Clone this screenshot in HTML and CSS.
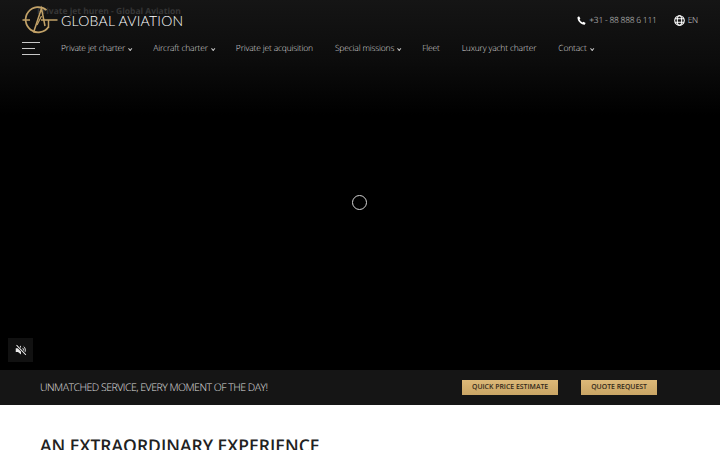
FILE: index.html
```html
<!DOCTYPE html>
<html lang="en">

<head>
    <meta charset="UTF-8">
    <meta name="viewport" content="width=device-width, initial-scale=1.0">
    <title>Global Aviation</title>
    <link rel="stylesheet" href="styles.css">
</head>

<body>
    <section class="hero">
        <span class="ghost-title">Private jet huren - Global Aviation</span>

        <header class="header">
            <div class="top-row">
                <a class="logo" href="#">
                    <svg class="logo-mark" viewBox="0 0 36 30" width="36" height="30" fill="none" stroke="#c2a268">
                        <path d="M24.5 5.2A12.6 12.6 0 1 0 26.5 22" stroke-width="1.7" />
                        <path d="M11.5 27.5L19.5 3.5L23 21" stroke-width="1.5" />
                        <path d="M15 20L19.5 11" stroke-width="1.2" />
                        <path d="M0.5 15H8M19 15H35.5" stroke-width="1.3" />
                        <path d="M26.5 15V23" stroke-width="1.5" />
                    </svg>
                    <span class="logo-text">GLOBAL AVIATION</span>
                </a>
                <div class="top-links">
                    <span class="phone">
                        <svg class="icon" viewBox="0 0 16 16" width="9" height="9" fill="#fff">
                            <path d="M3.6 0.6L6 4.6 4.6 6.4C5.4 8.4 7.4 10.6 9.6 11.4L11.4 10 15.4 12.6 13.6 15.6C7.4 16 0.4 8.6 0.8 2.2Z" />
                        </svg>
                        +31 - 88 888 6 111
                    </span>
                    <span class="lang">
                        <svg class="icon" viewBox="0 0 16 16" width="11" height="11" fill="none" stroke="#fff" stroke-width="1.5">
                            <circle cx="8" cy="8" r="7" />
                            <ellipse cx="8" cy="8" rx="3.2" ry="7" />
                            <path d="M1.5 5.5H14.5M1.5 10.5H14.5" />
                        </svg>
                        EN
                    </span>
                </div>
            </div>

            <nav class="nav-row">
                <div class="burger">
                    <span class="burger-long"></span>
                    <span class="burger-short"></span>
                    <span class="burger-long"></span>
                </div>
                <ul class="menu">
                    <li class="has-sub">Private jet charter</li>
                    <li class="has-sub">Aircraft charter</li>
                    <li>Private jet acquisition</li>
                    <li class="has-sub">Special missions</li>
                    <li>Fleet</li>
                    <li>Luxury yacht charter</li>
                    <li class="has-sub">Contact</li>
                </ul>
            </nav>
        </header>

        <div class="spinner"></div>

        <button class="mute">
            <svg viewBox="0 0 16 16" width="12" height="12" fill="#e8e8e8">
                <path d="M1 5.5H4L8 2V14L4 10.5H1Z" />
                <path d="M10 5.2C11.6 6.4 11.6 9.6 10 10.8M11.6 3.4C14.4 5.4 14.4 10.6 11.6 12.6" fill="none" stroke="#e8e8e8" stroke-width="1.3" />
                <path d="M2 1.5L14.5 14.5" fill="none" stroke="#000" stroke-width="3.2" />
                <path d="M2 1.5L14.5 14.5" fill="none" stroke="#e8e8e8" stroke-width="1.4" />
            </svg>
        </button>
    </section>

    <section class="cta-bar">
        <p class="slogan">UNMATCHED SERVICE, EVERY MOMENT OF THE DAY!</p>
        <div class="cta-buttons">
            <a class="btn-gold" href="#">QUICK PRICE ESTIMATE</a>
            <a class="btn-gold" href="#">QUOTE REQUEST</a>
        </div>
    </section>

    <section class="intro">
        <h1>AN EXTRAORDINARY EXPERIENCE</h1>
    </section>
</body>

</html>
```

FILE: styles.css
```css
html,
body {
    height: 100%;
    overflow: hidden;
}

body {
    margin: 0;
    background: #fff;
    font-family: 'Open Sans', sans-serif;
    text-rendering: geometricPrecision;
}

a {
    text-decoration: none;
}

.hero {
    position: relative;
    height: 370px;
    background: linear-gradient(to bottom, #151515 0, #0c0c0c 60px, #000 115px);
}

.ghost-title {
    position: absolute;
    left: 37px;
    top: 6px;
    font-size: 8.5px;
    font-weight: 700;
    color: #363636;
}

.header {
    position: relative;
    padding: 5px 22px 0;
}

.top-row {
    display: flex;
    justify-content: space-between;
    align-items: center;
    height: 30px;
}

.logo {
    display: flex;
    align-items: center;
    gap: 3px;
}

.logo-text {
    font-family: 'Lato', sans-serif;
    font-weight: 300;
    font-size: 14px;
    letter-spacing: 0.25px;
    color: #fff;
    margin-top: 1px;
}

.top-links {
    display: flex;
    gap: 17px;
    font-size: 8.5px;
    letter-spacing: -0.25px;
    font-weight: 300;
    color: #d8d8d8;
}

.phone,
.lang {
    display: flex;
    align-items: center;
    gap: 3px;
}

.nav-row {
    display: flex;
    align-items: center;
    margin-top: 7px;
    height: 13px;
}

.burger {
    display: flex;
    flex-direction: column;
    align-items: flex-start;
    gap: 5px;
    width: 39px;
}

.burger span {
    display: block;
    height: 1px;
    background: #c8c8c8;
}

.burger-long {
    width: 18px;
}

.burger-short {
    width: 13px;
}

.menu {
    display: flex;
    gap: 22px;
    margin: 0;
    padding: 0;
    list-style: none;
    font-size: 8.5px;
    font-weight: 300;
    letter-spacing: -0.18px;
    color: #dcdcdc;
}

.has-sub::after {
    content: "";
    display: inline-block;
    width: 2px;
    height: 2px;
    margin-left: 3px;
    border-right: 1px solid #c4c4c4;
    border-bottom: 1px solid #c4c4c4;
    transform: rotate(45deg) translateY(-1px);
}

.spinner {
    position: absolute;
    left: 352px;
    top: 195px;
    width: 13px;
    height: 13px;
    border: 1.5px solid #d4d4d4;
    border-radius: 50%;
}

.mute {
    position: absolute;
    left: 8px;
    top: 338px;
    display: flex;
    justify-content: center;
    align-items: center;
    width: 25px;
    height: 24px;
    padding: 0;
    border: none;
    background: #111;
}

.cta-bar {
    display: flex;
    justify-content: space-between;
    align-items: center;
    height: 35px;
    padding: 0 63px 0 40px;
    background: #151515;
}

.slogan {
    margin: 0;
    font-size: 10.5px;
    font-weight: 300;
    letter-spacing: -0.5px;
    color: #e0e0e0;
}

.cta-buttons {
    display: flex;
    gap: 23px;
}

.btn-gold {
    display: block;
    padding: 0 10px;
    line-height: 15px;
    font-size: 6.9px;
    font-weight: 600;
    color: #33291a;
    background: linear-gradient(to bottom, #dcb878, #c9a565);
}

.intro {
    padding: 29px 40px;
}

h1 {
    margin: 0;
    font-size: 17.5px;
    font-weight: 600;
    color: #222;
}
```
